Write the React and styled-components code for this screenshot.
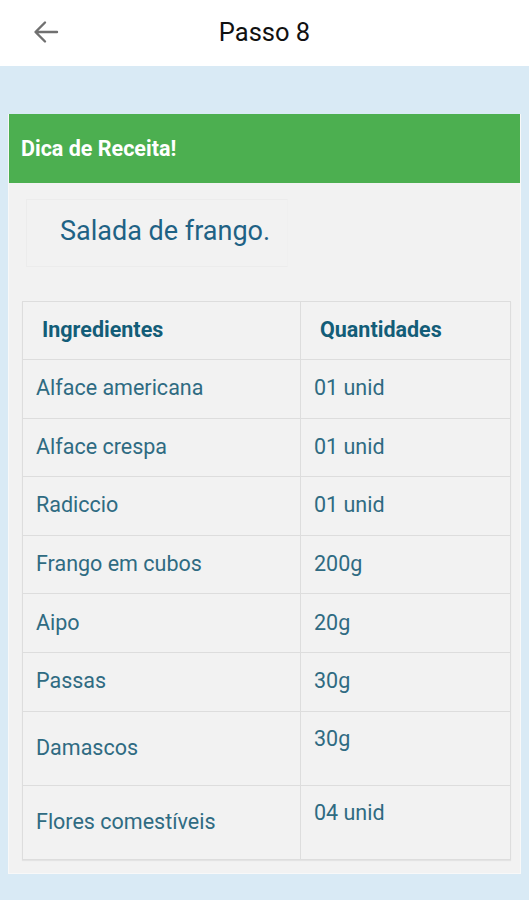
import React from "react";
import styled, { createGlobalStyle } from "styled-components";

const rows = [
  { name: "Alface americana", qty: "01 unid" },
  { name: "Alface crespa", qty: "01 unid" },
  { name: "Radiccio", qty: "01 unid" },
  { name: "Frango em cubos", qty: "200g" },
  { name: "Aipo", qty: "20g" },
  { name: "Passas", qty: "30g" },
  { name: "Damascos", qty: "30g", tall: true },
  { name: "Flores comestíveis", qty: "04 unid", tall: true },
];

const App = () => {
  return (
    <Page>
      <Global />
      <TopBar>
        <BackButton aria-label="Voltar">
          <svg width="26" height="24" viewBox="0 0 26 24" fill="none">
            <path
              d="M24 12H3 M12 2.5L2.5 12L12 21.5"
              stroke="#707070"
              strokeWidth="2.4"
              strokeLinecap="round"
              strokeLinejoin="round"
            />
          </svg>
        </BackButton>
        <Title>Passo 8</Title>
      </TopBar>

      <Content>
        <Card>
          <CardHeader>Dica de Receita!</CardHeader>
          <CardBody>
            <RecipeName>Salada de frango.</RecipeName>
            <Table>
              <colgroup>
                <col style={{ width: "278px" }} />
                <col />
              </colgroup>
              <thead>
                <HeadRow>
                  <Th>Ingredientes</Th>
                  <Th>Quantidades</Th>
                </HeadRow>
              </thead>
              <tbody>
                {rows.map((row) => (
                  <Row key={row.name} $tall={row.tall}>
                    <Td>{row.name}</Td>
                    <Td $top={row.tall}>{row.qty}</Td>
                  </Row>
                ))}
              </tbody>
            </Table>
          </CardBody>
        </Card>
      </Content>
    </Page>
  );
};

export default App;

const Global = createGlobalStyle`
  body {
    margin: 0;
    font-family: Roboto, "Liberation Sans", sans-serif;
    background: #d9eaf5;
  }
`;

const Page = styled.div`
  width: 529px;
  min-height: 900px;
  background: #d9eaf5;
`;

const TopBar = styled.div`
  position: relative;
  height: 66px;
  background: #ffffff;
  display: flex;
  align-items: center;
  justify-content: center;
`;

const BackButton = styled.button`
  position: absolute;
  left: 33px;
  top: 20px;
  width: 26px;
  height: 24px;
  padding: 0;
  border: none;
  background: none;
  display: flex;
`;

const Title = styled.h1`
  margin: 0 0 2px;
  font-size: 25.5px;
  font-weight: 400;
  color: #111111;
`;

const Content = styled.div`
  padding: 48px 8px 27px;
`;

const Card = styled.div`
  background: #f2f2f2;
  border: 1px solid #f8f8f8;
  border-top: none;
`;

const CardHeader = styled.div`
  height: 69px;
  background: #4caf50;
  color: #ffffff;
  font-size: 21.5px;
  font-weight: 700;
  display: flex;
  align-items: center;
  padding-left: 12px;
`;

const CardBody = styled.div`
  padding: 16px 9px 13px 13px;
`;

const RecipeName = styled.div`
  width: 262px;
  height: 68px;
  margin-left: 4px;
  padding: 0 0 4px 33px;
  border: 1px solid #ececec;
  border-right-color: #f0f0f0;
  font-size: 27px;
  white-space: nowrap;
  color: #1f6285;
  display: flex;
  align-items: center;
  box-sizing: border-box;
`;

const Table = styled.table`
  width: 100%;
  margin-top: 34px;
  border-collapse: collapse;
  table-layout: fixed;
  box-shadow: 0 1px 1px rgba(0, 0, 0, 0.06);
`;

const HeadRow = styled.tr`
  height: 58px;
`;

const Th = styled.th`
  padding: 0 0 2px 19px;
  border: 1px solid #dddddd;
  text-align: left;
  font-size: 21.5px;
  font-weight: 700;
  color: #135d78;
`;

const Row = styled.tr`
  height: ${(p) => (p.$tall ? "74px" : "58.6px")};
`;

const Td = styled.td`
  padding: ${(p) => (p.$top ? "14px 0 0 13px" : "0 0 2px 13px")};
  vertical-align: ${(p) => (p.$top ? "top" : "middle")};
  border: 1px solid #dddddd;
  font-size: 21.5px;
  color: #2f6b82;
  white-space: nowrap;
`;
